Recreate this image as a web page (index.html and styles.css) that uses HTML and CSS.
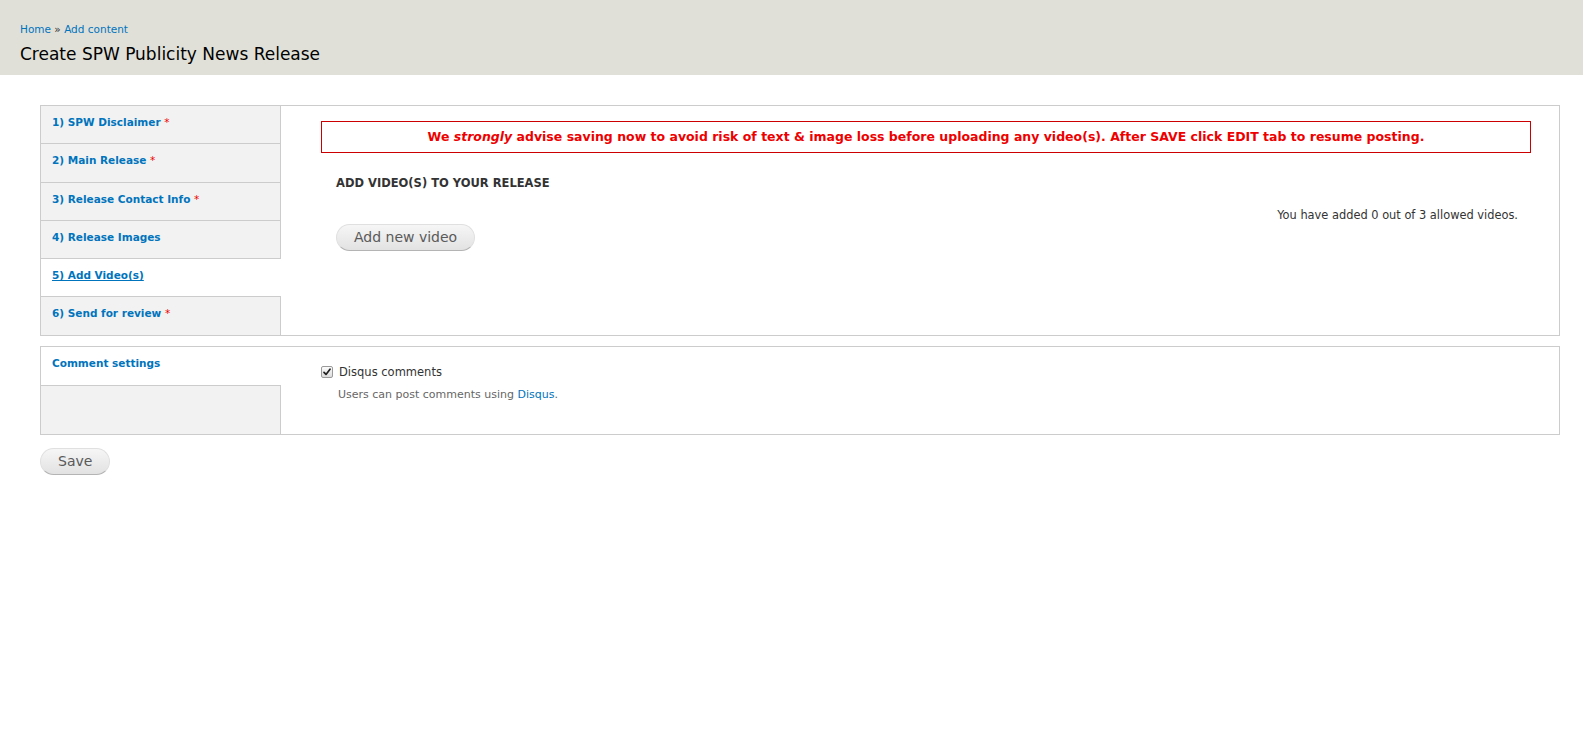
FILE: index.html
```html
<!DOCTYPE html>
<html lang="en">
<head>
    <meta charset="UTF-8">
    <title>Create SPW Publicity News Release</title>
    <link rel="stylesheet" href="styles.css">
</head>
<body>
    <div class="branding">
        <div class="breadcrumb"><a href="#">Home</a> » <a href="#">Add content</a></div>
        <h1 class="page-title">Create SPW Publicity News Release</h1>
    </div>

    <div class="page">
        <form class="node-form">
            <!-- main vertical tabs -->
            <div class="vtabs">
                <ul class="vtabs-list">
                    <li><a href="#">1) SPW Disclaimer <span class="req">*</span></a></li>
                    <li><a href="#">2) Main Release <span class="req">*</span></a></li>
                    <li><a href="#">3) Release Contact Info <span class="req">*</span></a></li>
                    <li><a href="#">4) Release Images</a></li>
                    <li class="selected"><a href="#">5) Add Video(s)</a></li>
                    <li><a href="#">6) Send for review <span class="req">*</span></a></li>
                </ul>
                <div class="vtabs-pane">
                    <div class="warning">We <em>strongly</em> advise saving now to avoid risk of text &amp; image loss before uploading any video(s). After SAVE click EDIT tab to resume posting.</div>
                    <div class="video-field">
                        <h2 class="field-label">ADD VIDEO(S) TO YOUR RELEASE</h2>
                        <div class="field-count">You have added 0 out of 3 allowed videos.</div>
                        <button type="button" class="btn">Add new video</button>
                    </div>
                </div>
            </div>

            <!-- comment settings -->
            <div class="vtabs">
                <ul class="vtabs-list">
                    <li class="selected single"><a href="#">Comment settings</a></li>
                </ul>
                <div class="vtabs-pane pane-comments">
                    <label class="check">
                        <span class="checkbox">
                            <svg width="8" height="8" viewBox="0 0 8 8"><path d="M1 4.3 L3 6.4 L7 1.2" fill="none" stroke="#222" stroke-width="1.7" stroke-linecap="round" stroke-linejoin="round"/></svg>
                        </span>
                        Disqus comments
                    </label>
                    <div class="description">Users can post comments using <a href="#">Disqus</a>.</div>
                </div>
            </div>

            <button type="button" class="btn btn-save">Save</button>
        </form>
    </div>
</body>
</html>
```

FILE: styles.css
```css
body {
    font-family: "DejaVu Sans", Verdana, sans-serif;
    font-size: 13px;
    margin: 0;
    color: #333;
    background: #fff;
}
a {
    color: #0074bd;
    text-decoration: none;
}
.branding {
    background-color: #e0e0d8;
    padding: 21px 20px 8px;
    height: 46px;
}
.breadcrumb {
    font-size: 10.5px;
    line-height: 16px;
}
.page-title {
    font-size: 17px;
    font-weight: normal;
    color: #000;
    margin: 5px 0 0;
    line-height: 24px;
}
.page {
    padding: 30px 23px 0 40px;
}
.vtabs {
    display: flex;
    border: 1px solid #ccc;
    margin-bottom: 10px;
}
.vtabs-list {
    list-style: none;
    margin: 0;
    padding: 0;
    width: 239px;
    flex-shrink: 0;
    background: #f2f2f2;
    border-right: 1px solid #ccc;
}
.vtabs-list li {
    height: 38.3px;
    border-bottom: 1px solid #ccc;
    box-sizing: border-box;
    padding: 8px 11px 0;
    line-height: 16px;
}
.vtabs-list li:last-child {
    border-bottom: 0;
    height: 38px;
}
.vtabs-list li.single {
    border-bottom: 1px solid #ccc;
    height: 38.3px;
}
.vtabs-list li a {
    font-size: 10.5px;
    font-weight: bold;
}
.vtabs-list li.selected {
    background: #fff;
    margin-right: -1px;
}
.vtabs-list li.selected a {
    text-decoration: underline;
}
.vtabs-list li.single a {
    text-decoration: none;
}
.req {
    color: #e00;
    font-weight: normal;
}
.vtabs-pane {
    flex: 1;
    padding: 15px 28px 0 40px;
}
.warning {
    border: 1px solid #c00;
    color: #e00;
    font-weight: bold;
    text-align: center;
    font-size: 12.5px;
    line-height: 16px;
    padding: 7px 0 7px;
}
.video-field {
    padding: 0 13px 0 15px;
}
.field-label {
    font-size: 11.5px;
    font-weight: bold;
    margin: 22px 0 0;
    line-height: 16px;
    color: #333;
}
.field-count {
    text-align: right;
    font-size: 11.4px;
    margin-top: 17px;
    line-height: 14px;
}
.btn {
    font-family: inherit;
    font-size: 14px;
    color: #5a5a5a;
    background: linear-gradient(#f6f6f6, #e2e2e2);
    border: 1px solid #e0e0e0;
    border-bottom-color: #b4b4b4;
    border-radius: 14px;
    padding: 3px 17px 4px 17px;
    line-height: 18px;
    margin-top: 2px;
    cursor: pointer;
}
.pane-comments {
    padding: 18px 28px 32px 40px;
}
.check {
    display: flex;
    align-items: center;
    font-size: 11.5px;
    line-height: 14px;
}
.checkbox {
    display: flex;
    align-items: center;
    justify-content: center;
    width: 10px;
    height: 10px;
    margin-right: 6px;
    border: 1px solid #9a9a9a;
    border-radius: 2px;
    background: linear-gradient(#fcfcfc, #dcdcdc);
}
.description {
    font-size: 11px;
    color: #666;
    margin: 9px 0 0 17px;
    line-height: 14px;
}
.btn-save {
    margin-top: 3px;
}
```
